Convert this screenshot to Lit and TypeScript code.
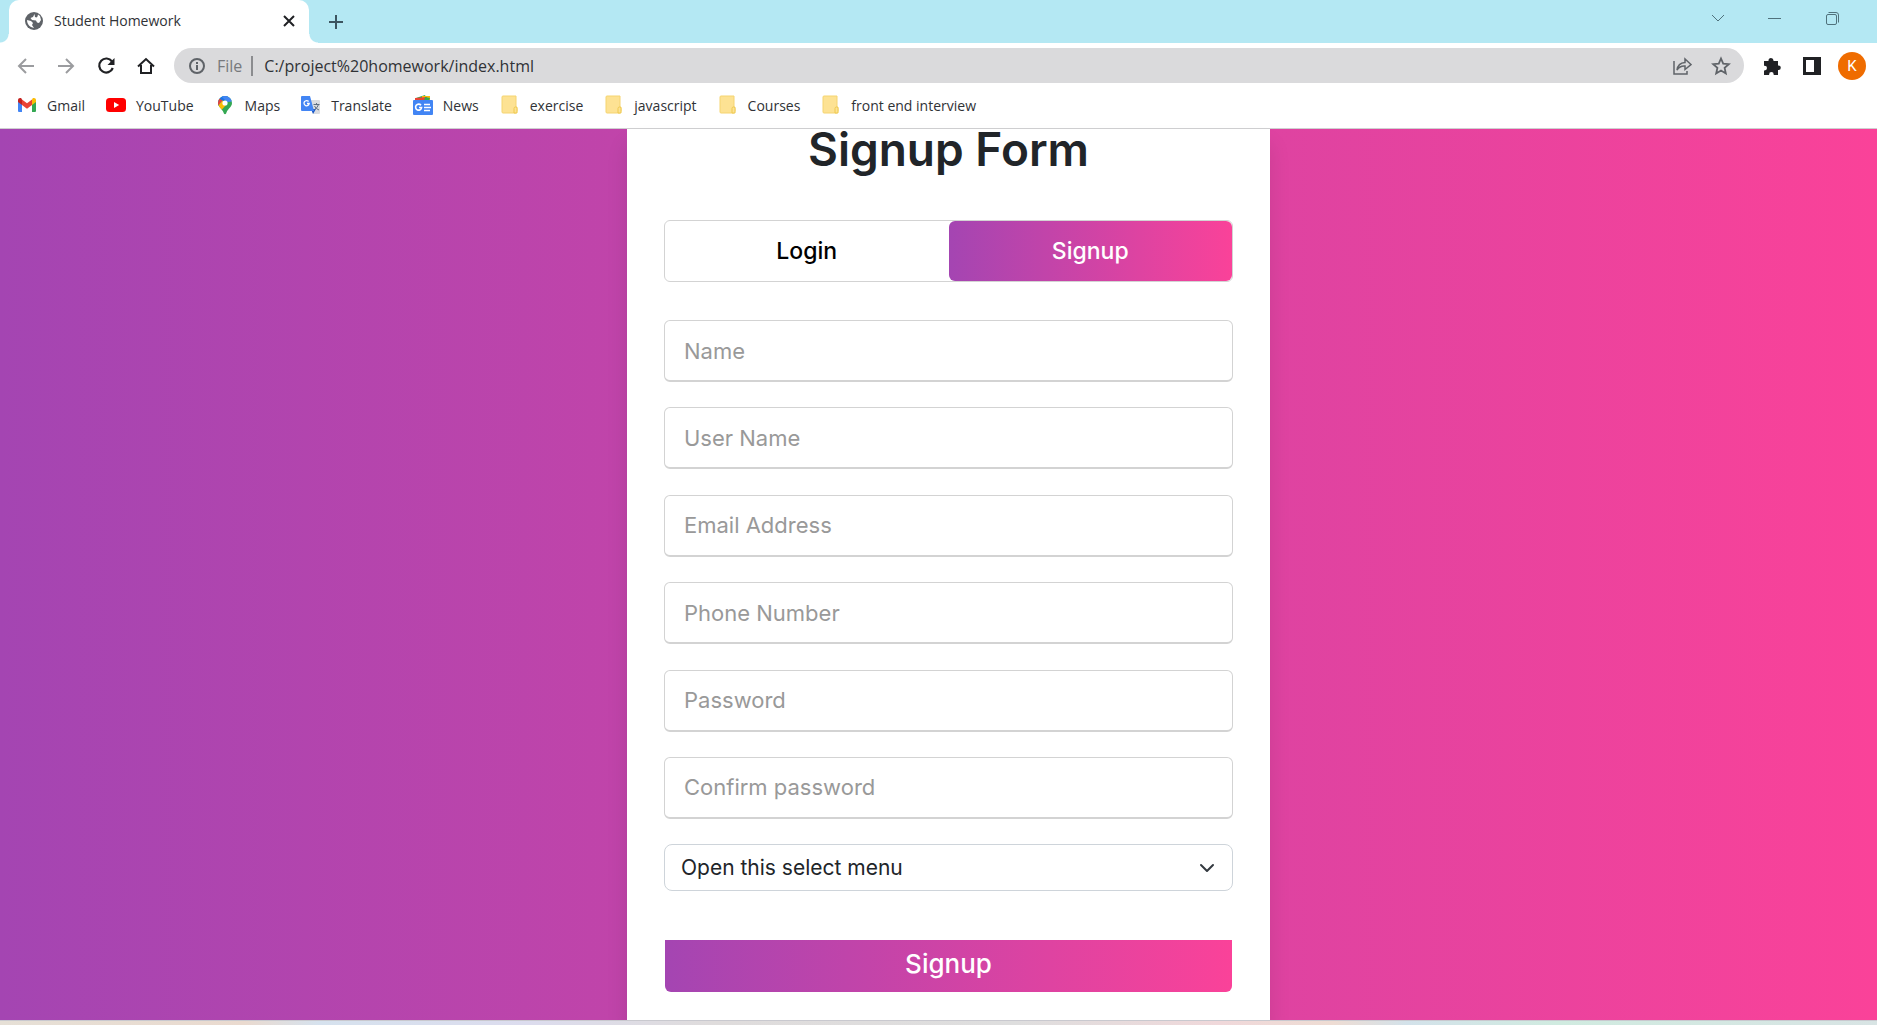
import { LitElement, html, css, svg } from "lit";
import { customElement } from "lit/decorators.js";

const folder = svg`<path d="M3 1h13v11h1v4l-1 2H3a1 1 0 0 1-1-1V2a1 1 0 0 1 1-1z" fill="#fde293" stroke="#f5d470"/><path d="M14 13.500q0-1.500 1.500-1.500T17 13.500V18h-3z" fill="#fde293" stroke="#eec94f"/>`;

const bookmarks = [
  {
    label: "Gmail",
    icon: svg`<path d="M1 4.500V16a1 1 0 0 0 1 1h3V8.500z" fill="#4285f4"/><path d="M19 4.500V16a1 1 0 0 1-1 1h-3V8.500z" fill="#34a853"/><path d="M15 4.500V10l4-3V5.200C19 3.200 17 2.500 15.500 3.500z" fill="#fbbc04"/><path d="M5 10V4.500l5 3.700 5-3.700V10l-5 3.800z" fill="#ea4335"/><path d="M1 5.200V7l4 3V4.500l-.5-1C3 2.500 1 3.200 1 5.200z" fill="#c5221f"/>`,
  },
  {
    label: "YouTube",
    icon: svg`<rect y="3" width="20" height="14" rx="3.500" fill="#f00"/><path d="M8 7l5.200 3L8 13z" fill="#fff"/>`,
  },
  {
    label: "Maps",
    icon: svg`<clipPath id="pin"><path d="M10 1a7 7 0 0 1 7 7c0 4-4 5.500-5.500 9.500-.4 1.200-.6 1.700-1.500 1.700s-1.100-.5-1.500-1.700C7 13.500 3 12 3 8a7 7 0 0 1 7-7z"/></clipPath><g clip-path="url(#pin)"><path d="M0 0h20v20H0z" fill="#34a853"/><path d="M2 13L14 0H0z" fill="#1a73e8"/><path d="M2 2.500l5.500 3L2 12z" fill="#ea4335"/><path d="M6 1L20-2v8l-8 1z" fill="#4285f4"/><path d="M2 12L7.500 5.500 12 9 5.500 16z" fill="#fbbc04"/></g><circle cx="10" cy="8" r="2.600" fill="#fff"/>`,
  },
  {
    label: "Translate",
    icon: svg`<path d="M8 5h10a1 1 0 0 1 1 1v12a1 1 0 0 1-1 1h-6z" fill="#dadce0"/><path d="M10 14h5l-3 5z" fill="#1a56c4"/><path d="M1 1h8l4 15H1a1 1 0 0 1-1-1V2a1 1 0 0 1 1-1z" fill="#4285f4"/><path d="M7.600 6.500A2.600 2.600 0 1 0 8.200 8.500H6" fill="none" stroke="#fff" stroke-width="1.300"/><path d="M12.500 9.500h6M15.500 8v1.500M17.500 9.500q-1 3.500-4 5M13.500 11q1.500 3 4.500 4" fill="none" stroke="#5f6e80"/>`,
  },
  {
    label: "News",
    icon: svg`<path d="M3 3l9-3 2 5H3z" fill="#34a853"/><path d="M9 1h8v5H9z" fill="#fbbc04"/><path d="M2 3l12-1v4H2z" fill="#ea4335"/><path d="M12 2l5 1-1 3h-5z" fill="#34a853"/><rect y="5" width="20" height="15" rx="1" fill="#4285f4"/><path d="M8 10.300A3 3 0 1 0 8.600 12.500H6" fill="none" stroke="#fff" stroke-width="1.600"/><path d="M11 9.500h6M11 12.500h7M11 15.500h6" stroke="#fff" stroke-width="1.600"/>`,
  },
  { label: "exercise", icon: folder },
  { label: "javascript", icon: folder },
  { label: "Courses", icon: folder },
  { label: "front end interview", icon: folder },
];

const fields = [
  { label: "Name", type: "text" },
  { label: "User Name", type: "text" },
  { label: "Email Address", type: "email" },
  { label: "Phone Number", type: "tel" },
  { label: "Password", type: "password" },
  { label: "Confirm password", type: "password" },
];

@customElement("browser-chrome")
export class BrowserChrome extends LitElement {
  static styles = css`
    :host {
      display: block;
      background: #fff;
      color: #303236;
      font-family: "Open Sans", "Noto Sans", sans-serif;
      font-size: 14px;
      border-bottom: 1px solid #cfcfd1;
    }
    button {
      display: grid;
      place-items: center;
      flex: none;
      width: 24px;
      height: 24px;
      padding: 0;
      border: 0;
      background: none;
      color: #202124;
    }
    svg {
      display: block;
      fill: none;
      stroke: currentColor;
    }
    .strip {
      display: flex;
      height: 43px;
      background: #b4e8f3;
    }
    .flare {
      align-self: flex-end;
      width: 9px;
      height: 9px;
    }
    .flare.left {
      background: radial-gradient(circle at 0 0, #b4e8f3 8px, #fff 9px);
    }
    .flare.right {
      background: radial-gradient(circle at 100% 0, #b4e8f3 8px, #fff 9px);
    }
    .tab {
      display: flex;
      align-items: center;
      gap: 11px;
      box-sizing: border-box;
      width: 300px;
      padding: 0 8px 2px 16px;
      border-radius: 10px 10px 0 0;
      background: #fff;
    }
    .title {
      flex: 1;
    }
    .add {
      align-self: center;
      margin-left: 6px;
      color: #3c5560;
    }
    .window {
      display: flex;
      gap: 33px;
      margin-left: auto;
      padding: 6px 33px 0 0;
    }
    .window button {
      color: #50727c;
    }
    .bar {
      display: flex;
      align-items: center;
      gap: 16px;
      height: 45px;
      padding: 0 11px 0 14px;
    }
    .dim {
      color: #9b9c9f;
    }
    .omni {
      display: flex;
      flex: 1;
      align-items: center;
      height: 35px;
      box-sizing: border-box;
      padding: 0 11px;
      border-radius: 18px;
      background: #dadadc;
      color: #5f6368;
    }
    .omni button {
      color: #5f6368;
    }
    .scheme {
      margin-left: 8px;
      padding-right: 9px;
      border-right: 2px solid #8b8c8f;
      font-size: 16px;
      line-height: 20px;
      color: #77797c;
    }
    .url {
      flex: 1;
      min-width: 0;
      padding: 0 0 0 11px;
      border: 0;
      outline: 0;
      background: none;
      color: #303236;
      font: 16px "Open Sans", "Noto Sans", sans-serif;
    }
    .omni .share {
      margin-right: 15px;
    }
    .avatar {
      width: 28px;
      height: 28px;
      margin-left: -2px;
      border-radius: 50%;
      background: #ef6c00;
      color: #fff;
      font: 15px Roboto, sans-serif;
    }
    .marks {
      display: flex;
      align-items: center;
      gap: 21px;
      box-sizing: border-box;
      height: 40px;
      padding: 0 17px 6px;
    }
    .mark {
      display: flex;
      align-items: center;
      gap: 10px;
      color: inherit;
      text-decoration: none;
      white-space: nowrap;
    }
    .mark svg {
      stroke: none;
    }
  `;

  render() {
    return html`
      <div class="strip">
        <span class="flare left"></span>
        <div class="tab">
          <svg width="18" height="18" viewBox="0 0 18 18">
            <circle cx="9" cy="9" r="9" fill="#5f6368" stroke="none" />
            <path d="M2 8l4 1 2 2-1 2 2 3-3-1a8 8 0 0 1-4-7zM9.500 2L8 5 5.500 6 7 8l4 .5 1 2 2 .5 2-3-1-4-2-1.500-.5 2-1 1L10 5z" fill="#fff" stroke="none" />
          </svg>
          <span class="title">Student Homework</span>
          <button aria-label="Close tab">
            <svg width="12" height="12" viewBox="0 0 12 12" stroke-width="2"><path d="M1 1l10 10M11 1L1 11" /></svg>
          </button>
        </div>
        <span class="flare right"></span>
        <button class="add" aria-label="New tab">
          <svg width="16" height="16" viewBox="0 0 16 16" stroke-width="2"><path d="M8 1v14M1 8h14" /></svg>
        </button>
        <div class="window">
          <button aria-label="Search tabs">
            <svg width="14" height="14" viewBox="0 0 14 14"><path d="M1 4l6 6 6-6" /></svg>
          </button>
          <button aria-label="Minimize">
            <svg width="14" height="14" viewBox="0 0 14 14"><path d="M0 7.500h13" /></svg>
          </button>
          <button aria-label="Restore">
            <svg width="14" height="14" viewBox="0 0 14 14"><rect x="1.500" y="3.500" width="10" height="10" rx="1.500" /><path d="M3.500 1.500H11a2.500 2.500 0 0 1 2.500 2.500v7.500" /></svg>
          </button>
        </div>
      </div>
      <div class="bar">
        <button class="dim" aria-label="Back">
          <svg width="18" height="18" viewBox="0 0 18 18" stroke-width="2"><path d="M17 9H2M9 2L2 9l7 7" /></svg>
        </button>
        <button class="dim" aria-label="Forward">
          <svg width="18" height="18" viewBox="0 0 18 18" stroke-width="2"><path d="M1 9h15M9 2l7 7-7 7" /></svg>
        </button>
        <button aria-label="Reload">
          <svg width="18" height="18" viewBox="0 0 18 18" stroke-width="2.200"><path d="M15 4.500A7 7 0 1 0 15.800 11" /><path d="M17.500 1v7h-7z" fill="currentColor" stroke="none" /></svg>
        </button>
        <button aria-label="Home">
          <svg width="18" height="18" viewBox="0 0 18 18" stroke-width="2"><path d="M1 9.500l8-7.500 8 7.500M4 8v8h10V8" /></svg>
        </button>
        <div class="omni">
          <button aria-label="Site information">
            <svg width="16" height="16" viewBox="0 0 16 16" stroke-width="2"><circle cx="8" cy="8" r="7" /><path d="M8 7v5M8 4v2" /></svg>
          </button>
          <span class="scheme">File</span>
          <input class="url" aria-label="Address" .value=${"C:/project%20homework/index.html"} />
          <button class="share" aria-label="Share">
            <svg width="20" height="20" viewBox="0 0 20 20" stroke-width="1.500"><path d="M2 5v13h13v-3" /><path d="M5 14q1-7 8-7.500V3l6 5.500-6 5v-3.500q-5-.5-8 4z" /></svg>
          </button>
          <button aria-label="Bookmark this page">
            <svg width="20" height="20" viewBox="0 0 20 20" stroke-width="1.800"><path d="M10 2.500l2.200 5.200 5.600.5-4.200 3.700 1.200 5.500L10 14.500l-4.800 2.900 1.200-5.500L2.200 8.200l5.600-.5z" /></svg>
          </button>
        </div>
        <button aria-label="Extensions">
          <svg width="20" height="20" viewBox="0 0 20 20"><path d="M2 5h4.500v-.5a2.500 2.500 0 0 1 5 0V5H16v4.500h.5a2.300 2.300 0 0 1 0 4.600H16V19h-4.300v-.6a2.300 2.300 0 0 0-4.600 0v.6H2v-4.500h.6a2.400 2.400 0 0 0 0-4.800H2z" fill="currentColor" stroke="none" /></svg>
        </button>
        <button aria-label="Side panel">
          <svg width="18" height="18" viewBox="0 0 18 18"><path d="M0 0h18v18H0zM3 3v12h8V3z" fill="currentColor" fill-rule="evenodd" stroke="none" /></svg>
        </button>
        <button class="avatar" aria-label="Profile">K</button>
      </div>
      <nav class="marks">
        ${bookmarks.map(
          (b) => html`<a class="mark" href="#"><svg width="20" height="20" viewBox="0 0 20 20">${b.icon}</svg>${b.label}</a>`
        )}
      </nav>
    `;
  }
}

@customElement("signup-form")
export class SignupForm extends LitElement {
  static styles = css`
    :host {
      display: block;
      box-sizing: border-box;
      width: 100%;
      max-width: 643px;
      padding: 0 37px;
      background: #fff;
      box-shadow: 0 15px 20px rgba(0, 0, 0, 0.1);
      font-family: Inter, "Open Sans", sans-serif;
      color: #212529;
    }
    h1 {
      margin: 0 0 50px;
      font-size: 46px;
      font-weight: 600;
      line-height: 41px;
      text-align: center;
    }
    .switch {
      display: flex;
      box-sizing: border-box;
      height: 62px;
      margin-bottom: 38px;
      border: 1px solid #d3d3d3;
      border-radius: 6px;
    }
    button {
      padding: 0;
      border: 0;
      font: 500 23px Inter, "Open Sans", sans-serif;
      color: #fff;
      background: linear-gradient(to right, #a445b2, #fa4299);
    }
    .switch button {
      flex: 1;
      border-radius: 6px;
    }
    .switch .login {
      background: none;
      color: #000;
    }
    .fields {
      display: flex;
      flex-direction: column;
      justify-content: space-between;
      height: 499px;
      margin-bottom: 25px;
    }
    input {
      display: block;
      box-sizing: border-box;
      width: 100%;
      height: 62px;
      padding: 0 19px;
      border: 1px solid #d3d3d3;
      border-bottom-width: 2px;
      border-radius: 6px;
      background: #fff;
      font: 22px Inter, "Open Sans", sans-serif;
    }
    input::placeholder {
      color: #999;
      opacity: 1;
    }
    select {
      display: block;
      box-sizing: border-box;
      appearance: none;
      width: 100%;
      height: 47px;
      padding: 0 16px;
      border: 1px solid #ced4da;
      border-radius: 8px;
      color: #212529;
      font: 21px Inter, "Open Sans", sans-serif;
      background: #fff
        url('data:image/svg+xml,<svg xmlns="http://www.w3.org/2000/svg" viewBox="0 0 16 16"><path fill="none" stroke="%23343a40" stroke-linecap="round" stroke-linejoin="round" stroke-width="2" d="M2 5l6 6 6-6"/></svg>')
        no-repeat right 17px center / 16px 16px;
    }
    .submit {
      display: block;
      width: calc(100% - 2px);
      height: 52px;
      margin: 49px 1px 27px;
      padding-bottom: 6px;
      border-radius: 0 0 6px 6px;
      font-size: 26px;
    }
  `;

  render() {
    return html`
      <h1>Signup Form</h1>
      <div class="switch">
        <button class="login" type="button">Login</button>
        <button type="button">Signup</button>
      </div>
      <form>
        <div class="fields">
          ${fields.map((f) => html`<input type=${f.type} placeholder=${f.label} aria-label=${f.label} />`)}
        </div>
        <select aria-label="Role">
          <option>Open this select menu</option>
        </select>
        <button class="submit" type="button">Signup</button>
      </form>
    `;
  }
}

@customElement("app-root")
export class AppRoot extends LitElement {
  static styles = css`
    :host {
      display: flex;
      flex-direction: column;
      min-height: 100vh;
    }
    main {
      display: flex;
      flex: 1;
      justify-content: center;
      padding-left: 20px;
      background: linear-gradient(to right, #a445b2, #fa4299);
    }
    footer {
      height: 4px;
      border-top: 1px solid #c9c9cf;
      background: linear-gradient(to right, #e6e0d6, #eadacf 13%, #d6e2ee 17%, #dcdcee 28%, #dfdcdc 38%, #dedede 54%, #f0d8da 65%, #eedcd3 71%, #d3e2ea 75%, #d0ebe0 83%, #d8e4e4);
    }
  `;

  render() {
    return html`
      <browser-chrome></browser-chrome>
      <main><signup-form></signup-form></main>
      <footer></footer>
    `;
  }
}
